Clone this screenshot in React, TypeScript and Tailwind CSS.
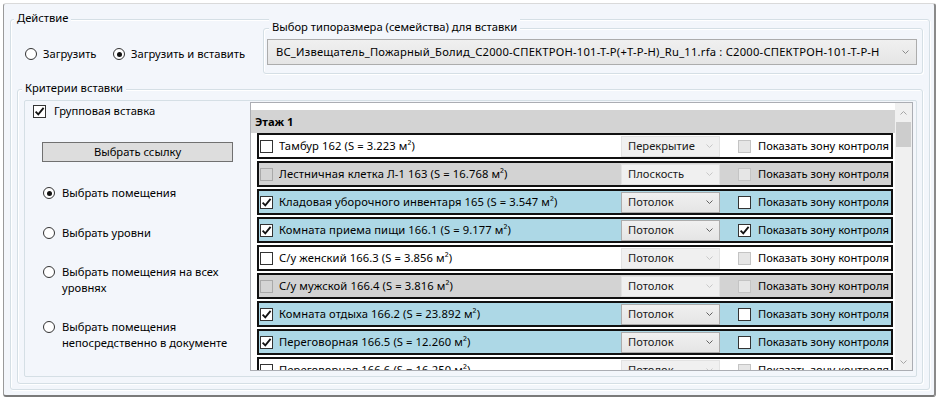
import React from "react";

type ChevProps = { color?: string; up?: boolean };
const Chevron = ({ color = "#606060", up = false }: ChevProps) => (
  <svg width="7" height="4" viewBox="0 0 7 4" className="block shrink-0">
    <path
      d={up ? "M0.5 3.5 L3.5 0.5 L6.5 3.5" : "M0.5 0.5 L3.5 3.5 L6.5 0.5"}
      fill="none"
      stroke={color}
      strokeWidth="1"
    />
  </svg>
);

const Tick = () => (
  <svg width="11" height="11" viewBox="0 0 11 11" className="block">
    <path d="M1.6 5.6 L4.3 8.4 L9.6 1.9" fill="none" stroke="#111111" strokeWidth="1.8" />
  </svg>
);

type CheckKind = "on" | "off" | "offgray";
function Check({ checked = false, kind = "on" }: { checked?: boolean; kind?: CheckKind }) {
  const cls =
    kind === "on"
      ? "border-[#333333] bg-white"
      : kind === "off"
      ? "border-[#c4c4c4] bg-[#e6e6e6]"
      : "border-[#a9a9a9] bg-[#d4d4d4]";
  return (
    <div className={`w-[13px] h-[13px] shrink-0 border flex items-center justify-center ${cls}`}>
      {checked && <Tick />}
    </div>
  );
}

function Radio({ checked = false }: { checked?: boolean }) {
  return (
    <div className="w-[12px] h-[12px] shrink-0 rounded-full border border-[#333333] bg-white flex items-center justify-center">
      {checked && <div className="w-[5px] h-[5px] rounded-full bg-[#111111]" />}
    </div>
  );
}

function Combo({ text, disabled }: { text: string; disabled: boolean }) {
  return (
    <div
      className={`w-[99px] h-[21px] shrink-0 border flex items-center justify-between pl-[6px] pr-[6px] ${
        disabled
          ? "border-[#e2e2e2] bg-[#f0f0f0]"
          : "border-[#acacac] bg-linear-to-b from-[#f0f0f0] to-[#e5e5e5]"
      }`}
    >
      <span className="text-[#1a1a1a] whitespace-nowrap">{text}</span>
      <Chevron color={disabled ? "#c8c8c8" : "#606060"} />
    </div>
  );
}

type GroupProps = {
  label: string;
  labelCls: string;
  className: string;
  children: React.ReactNode;
};
function Group({ label, labelCls, className, children }: GroupProps) {
  return (
    <div
      className={`relative border border-[#d5dfe5] rounded-[3px] shadow-[inset_1px_1px_0_#ffffff,1px_1px_0_#ffffff] ${className}`}
    >
      <span
        className={`absolute top-[-10px] px-[3px] bg-[#f3f6fb] leading-[16px] whitespace-nowrap ${labelCls}`}
      >
        {label}
      </span>
      {children}
    </div>
  );
}

type Row = {
  name: string;
  bg: string;
  checked: boolean;
  nameKind: CheckKind;
  combo: string;
  comboDis: boolean;
  zone: boolean;
  zoneKind: CheckKind;
};

const W = "bg-white";
const G = "bg-[#d3d3d3]";
const B = "bg-[#add8e6]";

const rows: Row[] = [
  { name: "Тамбур 162 (S = 3.223 м²)", bg: W, checked: false, nameKind: "on", combo: "Перекрытие", comboDis: true, zone: false, zoneKind: "off" },
  { name: "Лестничная клетка Л-1 163 (S = 16.768 м²)", bg: G, checked: false, nameKind: "offgray", combo: "Плоскость", comboDis: true, zone: false, zoneKind: "off" },
  { name: "Кладовая уборочного инвентаря 165 (S = 3.547 м²)", bg: B, checked: true, nameKind: "on", combo: "Потолок", comboDis: false, zone: false, zoneKind: "on" },
  { name: "Комната приема пищи 166.1 (S = 9.177 м²)", bg: B, checked: true, nameKind: "on", combo: "Потолок", comboDis: false, zone: true, zoneKind: "on" },
  { name: "С/у женский 166.3 (S = 3.856 м²)", bg: W, checked: false, nameKind: "on", combo: "Потолок", comboDis: true, zone: false, zoneKind: "off" },
  { name: "С/у мужской 166.4 (S = 3.816 м²)", bg: G, checked: false, nameKind: "offgray", combo: "Потолок", comboDis: true, zone: false, zoneKind: "off" },
  { name: "Комната отдыха 166.2 (S = 23.892 м²)", bg: B, checked: true, nameKind: "on", combo: "Потолок", comboDis: false, zone: false, zoneKind: "on" },
  { name: "Переговорная 166.5 (S = 12.260 м²)", bg: B, checked: true, nameKind: "on", combo: "Потолок", comboDis: false, zone: false, zoneKind: "on" },
  { name: "Переговорная 166.6 (S = 16.250 м²)", bg: W, checked: false, nameKind: "on", combo: "Потолок", comboDis: true, zone: false, zoneKind: "off" },
];

function RadioLine({ checked, children, className }: { checked?: boolean; children: React.ReactNode; className: string }) {
  return (
    <div className={`flex items-start ${className}`}>
      <div className="mt-[2px]">
        <Radio checked={checked} />
      </div>
      <span className="ml-[7px] leading-[16px]">{children}</span>
    </div>
  );
}

export default function App() {
  return (
    <div className="w-[941px] h-[401px] bg-white overflow-hidden font-['Noto_Sans',sans-serif] text-[11.2px] text-black leading-[16px]">
      <div className="ml-[3px] mt-[3px] w-[933px] h-[394px] bg-[#f3f6fb] border-t border-l border-r-2 border-b-2 border-t-[#dadada] border-l-[#9a9a9a] border-r-[#8a8a8a] border-b-[#7a7a7a] rounded-[3px] pt-[15px] pl-[6px]">
        <Group
          label="Действие"
          labelCls="left-[3px]"
          className="w-[920px] h-[371px] pt-[8px] pl-[6px] pr-[6px] flex flex-col"
        >
          <div className="flex items-start h-[46px]">
            <div className="flex ml-[8px] mt-[18px]">
              <div className="w-[88px] flex items-center">
                <Radio />
                <span className="ml-[6px]">Загрузить</span>
              </div>
              <div className="flex items-center">
                <Radio checked />
                <span className="ml-[6px]">Загрузить и вставить</span>
              </div>
            </div>
            <Group
              label="Выбор типоразмера (семейства) для вставки"
              labelCls="left-[5px]"
              className="ml-auto w-[660px] h-[46px] pt-[10px] pl-[3px]"
            >
              <div className="w-[650px] h-[26px] border border-[#acacac] bg-linear-to-b from-[#f0f0f0] to-[#e5e5e5] flex items-center pl-[8px] pr-[7px]">
                <span className="flex-1 whitespace-nowrap overflow-hidden tracking-[0.22px]">
                  ВС_Извещатель_Пожарный_Болид_С2000-СПЕКТРОН-101-Т-Р(+Т-Р-Н)_Ru_11.rfa : С2000-СПЕКТРОН-101-Т-Р-Н
                </span>
                <Chevron color="#8a8a8a" />
              </div>
            </Group>
          </div>

          <Group
            label="Критерии вставки"
            labelCls="left-[4px]"
            className="mt-[15px] w-[906px] h-[295px] pt-[10px] pl-[6px]"
          >
            <div className="w-[893px] h-[277px] border border-[#d5dfe5] rounded-[2px] flex">
              <div className="w-[225px] shrink-0 flex flex-col">
                <div className="flex items-center mt-[2px] pl-[8px] h-[16px]">
                  <Check checked kind="on" />
                  <span className="ml-[8px]">Групповая вставка</span>
                </div>
                <div className="ml-[17px] mt-[23px] w-[191px] h-[20px] border border-[#707070] bg-[#dddddd] flex items-center justify-center">
                  Выбрать ссылку
                </div>
                <RadioLine checked className="pl-[18px] mt-[23px]">
                  Выбрать помещения
                </RadioLine>
                <RadioLine className="pl-[18px] mt-[24px]">Выбрать уровни</RadioLine>
                <RadioLine className="pl-[18px] mt-[23px]">
                  Выбрать помещения на всех
                  <br />
                  уровнях
                </RadioLine>
                <RadioLine className="pl-[18px] mt-[23px]">
                  Выбрать помещения
                  <br />
                  непосредственно в документе
                </RadioLine>
              </div>

              <div className="mt-[1px] w-[663px] h-[269px] shrink-0 border border-[#abadb3] bg-white flex overflow-hidden">
                <div className="flex-1 min-w-0 overflow-hidden pt-[7px]">
                  <div className="h-[23px] bg-[#d3d3d3] font-bold pl-[4px] flex items-center">Этаж 1</div>
                  <div className="flex flex-col gap-[2px] pl-[6px] pr-[2px]">
                    {rows.map((r, i) => (
                      <div
                        key={i}
                        className={`h-[26px] shrink-0 border-2 border-[#111111] flex items-center ${r.bg}`}
                      >
                        <div className="ml-[1px]">
                          <Check checked={r.checked} kind={r.nameKind} />
                        </div>
                        <span className="ml-[6px] flex-1 min-w-0 whitespace-nowrap overflow-hidden tracking-[0.1px]">
                          {r.name}
                        </span>
                        <Combo text={r.combo} disabled={r.comboDis} />
                        <div className="ml-[18px]">
                          <Check checked={r.zone} kind={r.zoneKind} />
                        </div>
                        <span className="ml-[7px] w-[131px] mr-[2px] whitespace-nowrap overflow-hidden">
                          Показать зону контроля
                        </span>
                      </div>
                    ))}
                  </div>
                </div>
                <div className="w-[17px] shrink-0 bg-[#f0f0f0] flex flex-col">
                  <div className="h-[19px] flex items-center justify-center">
                    <Chevron up color="#a6a6a6" />
                  </div>
                  <div className="h-[25px] bg-[#cdcdcd] mx-[1px]" />
                  <div className="flex-1" />
                  <div className="h-[16px] flex items-center justify-center">
                    <Chevron color="#a6a6a6" />
                  </div>
                </div>
              </div>
            </div>
          </Group>
        </Group>
      </div>
    </div>
  );
}
